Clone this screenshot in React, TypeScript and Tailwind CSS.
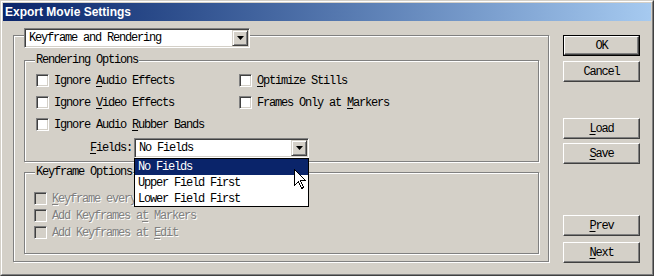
import React from "react";

const mono = "font-[family-name:'Liberation_Mono',monospace] text-[12px] leading-[12px] tracking-[-1.2px] text-black";
const U = ({ children }: { children: React.ReactNode }) => (
  <span className="underline underline-offset-[2px] decoration-1">{children}</span>
);

function Check({ disabled }: { disabled?: boolean }) {
  return (
    <span
      className={
        "block w-[13px] h-[13px] shrink-0 border border-t-[#808080] border-l-[#808080] border-r-white border-b-white shadow-[inset_1px_1px_0_#404040,inset_-1px_-1px_0_#d4d0c8] " +
        (disabled ? "bg-[#d4d0c8]" : "bg-white")
      }
    />
  );
}

function CheckRow({ children, disabled }: { children: React.ReactNode; disabled?: boolean }) {
  return (
    <div className="flex items-center gap-[5px] h-[13px]">
      <Check disabled={disabled} />
      <span
        className={
          "font-[family-name:'Liberation_Mono',monospace] text-[12px] leading-[12px] tracking-[-1.2px] whitespace-nowrap " +
          (disabled ? "text-[#808080] [text-shadow:1px_1px_0_#fff]" : "text-black")
        }
      >
        {children}
      </span>
    </div>
  );
}

function Arrow() {
  return (
    <span className="flex items-center justify-center w-[16px] h-[16px] bg-[#d4d0c8] border border-t-[#d4d0c8] border-l-[#d4d0c8] border-r-[#404040] border-b-[#404040] shadow-[inset_1px_1px_0_#fff,inset_-1px_-1px_0_#808080]">
      <svg width="7" height="4" viewBox="0 0 7 4">
        <polygon points="0,0 7,0 3.5,4" fill="#000" />
      </svg>
    </span>
  );
}

function Combo({ text, width }: { text: string; width: string }) {
  return (
    <div
      className={
        "flex items-center justify-between h-[20px] bg-white border border-t-[#808080] border-l-[#808080] border-r-white border-b-white shadow-[inset_1px_1px_0_#404040,inset_-1px_-1px_0_#d4d0c8] p-[1px] " +
        width
      }
    >
      <span className={mono + " pl-[3px] whitespace-nowrap"}>{text}</span>
      <Arrow />
    </div>
  );
}

function Btn({ children, def }: { children: React.ReactNode; def?: boolean }) {
  const inner = (
    <div
      className={
        "flex items-center justify-center bg-[#d4d0c8] border border-t-white border-l-white border-r-[#404040] border-b-[#404040] shadow-[inset_-1px_-1px_0_#808080] " +
        (def ? "w-[75px] h-[19px]" : "w-[77px] h-[21px]")
      }
    >
      <span className={mono}>{children}</span>
    </div>
  );
  if (def) return <div className="border border-black w-[77px] h-[21px]">{inner}</div>;
  return inner;
}

function Group({ label, className, children }: { label: string; className: string; children: React.ReactNode }) {
  return (
    <div
      className={
        "relative border border-[#808080] shadow-[inset_1px_1px_0_#fff,1px_1px_0_#fff] " + className
      }
    >
      <span className={mono + " absolute left-[10px] -top-[7px] bg-[#d4d0c8] px-[1px] whitespace-nowrap"}>
        {label}
      </span>
      {children}
    </div>
  );
}

export default function App() {
  return (
    <div className="w-[654px] h-[276px] border border-t-[#d4d0c8] border-l-[#d4d0c8] border-r-[#404040] border-b-[#404040] bg-[#d4d0c8]">
      <div className="w-full h-full border border-t-white border-l-white border-r-[#808080] border-b-[#808080] p-[1px] flex flex-col">
        <div className="h-[18px] shrink-0 bg-gradient-to-r from-[#0a246a] to-[#a6caf0] flex items-center pl-[2px]">
          <span className="font-[family-name:'Liberation_Sans',Arial,sans-serif] font-bold text-[12px] leading-[12px] text-white whitespace-nowrap">
            Export Movie Settings
          </span>
        </div>
        <div className="flex h-[252px]">
          <div className="ml-[10px] mt-[14px] w-[536px] h-[227px] border border-[#808080] shadow-[inset_1px_1px_0_#fff,1px_1px_0_#fff] flex flex-col shrink-0">
            <div className="ml-[10px] -mt-[8px]">
              <Combo text="Keyframe and Rendering" width="w-[226px]" />
            </div>
            <Group label="Rendering Options" className="ml-[10px] mt-[12px] w-[515px] h-[102px] z-10">
              <div className="pt-[13px] pl-[11px] grid grid-cols-[203px_auto] gap-y-[9px]">
                <CheckRow>
                  Ignore <U>A</U>udio Effects
                </CheckRow>
                <CheckRow>
                  <U>O</U>ptimize Stills
                </CheckRow>
                <CheckRow>
                  Ignore <U>V</U>ideo Effects
                </CheckRow>
                <CheckRow>
                  Frames Only at <U>M</U>arkers
                </CheckRow>
                <CheckRow>
                  Ignore Audio <U>R</U>ubber Bands
                </CheckRow>
              </div>
              <div className="mt-[7px] pl-[65px] flex items-center">
                <span className={mono + " w-[42px]"}>
                  <U>F</U>ields:
                </span>
                <div className="relative ml-[2px]">
                  <Combo text="No Fields" width="w-[175px]" />
                  <div className="absolute left-0 top-[20px] w-[175px] border border-black bg-white z-20 flex flex-col">
                    <div className="h-[16px] bg-[#0a246a] flex items-center pl-[3px]">
                      <span className="font-[family-name:'Liberation_Mono',monospace] text-[12px] leading-[12px] tracking-[-1.2px] text-white">
                        No Fields
                      </span>
                    </div>
                    <div className="h-[16px] flex items-center pl-[3px]">
                      <span className={mono}>Upper Field First</span>
                    </div>
                    <div className="h-[15px] flex items-center pl-[3px]">
                      <span className={mono}>Lower Field First</span>
                    </div>
                    <svg
                      className="absolute left-[159px] top-[10px]"
                      width="13"
                      height="21"
                      viewBox="0 0 13 21"
                    >
                      <path
                        d="M0.5 0.5 L0.5 16.5 L4.5 12.5 L7.5 19.5 L9.5 18.5 L6.5 11.5 L11.5 11.5 Z"
                        fill="#fff"
                        stroke="#000"
                        strokeWidth="1"
                        shapeRendering="crispEdges"
                      />
                    </svg>
                  </div>
                </div>
              </div>
            </Group>
            <Group label="Keyframe Options" className="ml-[10px] mt-[10px] w-[515px] h-[82px]">
              <div className="pt-[19px] pl-[9px] flex flex-col gap-[4px]">
                <CheckRow disabled>
                  <U>K</U>eyframe every
                </CheckRow>
                <CheckRow disabled>
                  Add Keyframes a<U>t</U> Markers
                </CheckRow>
                <CheckRow disabled>
                  Add Keyframes at <U>E</U>dit
                </CheckRow>
              </div>
            </Group>
          </div>
          <div className="ml-[14px] mt-[14px] flex flex-col">
            <Btn def>OK</Btn>
            <div className="mt-[5px]">
              <Btn>Cancel</Btn>
            </div>
            <div className="mt-[36px]">
              <Btn>
                <U>L</U>oad
              </Btn>
            </div>
            <div className="mt-[4px]">
              <Btn>
                <U>S</U>ave
              </Btn>
            </div>
            <div className="mt-[51px]">
              <Btn>
                <U>P</U>rev
              </Btn>
            </div>
            <div className="mt-[6px]">
              <Btn>
                <U>N</U>ext
              </Btn>
            </div>
          </div>
        </div>
      </div>
    </div>
  );
}
